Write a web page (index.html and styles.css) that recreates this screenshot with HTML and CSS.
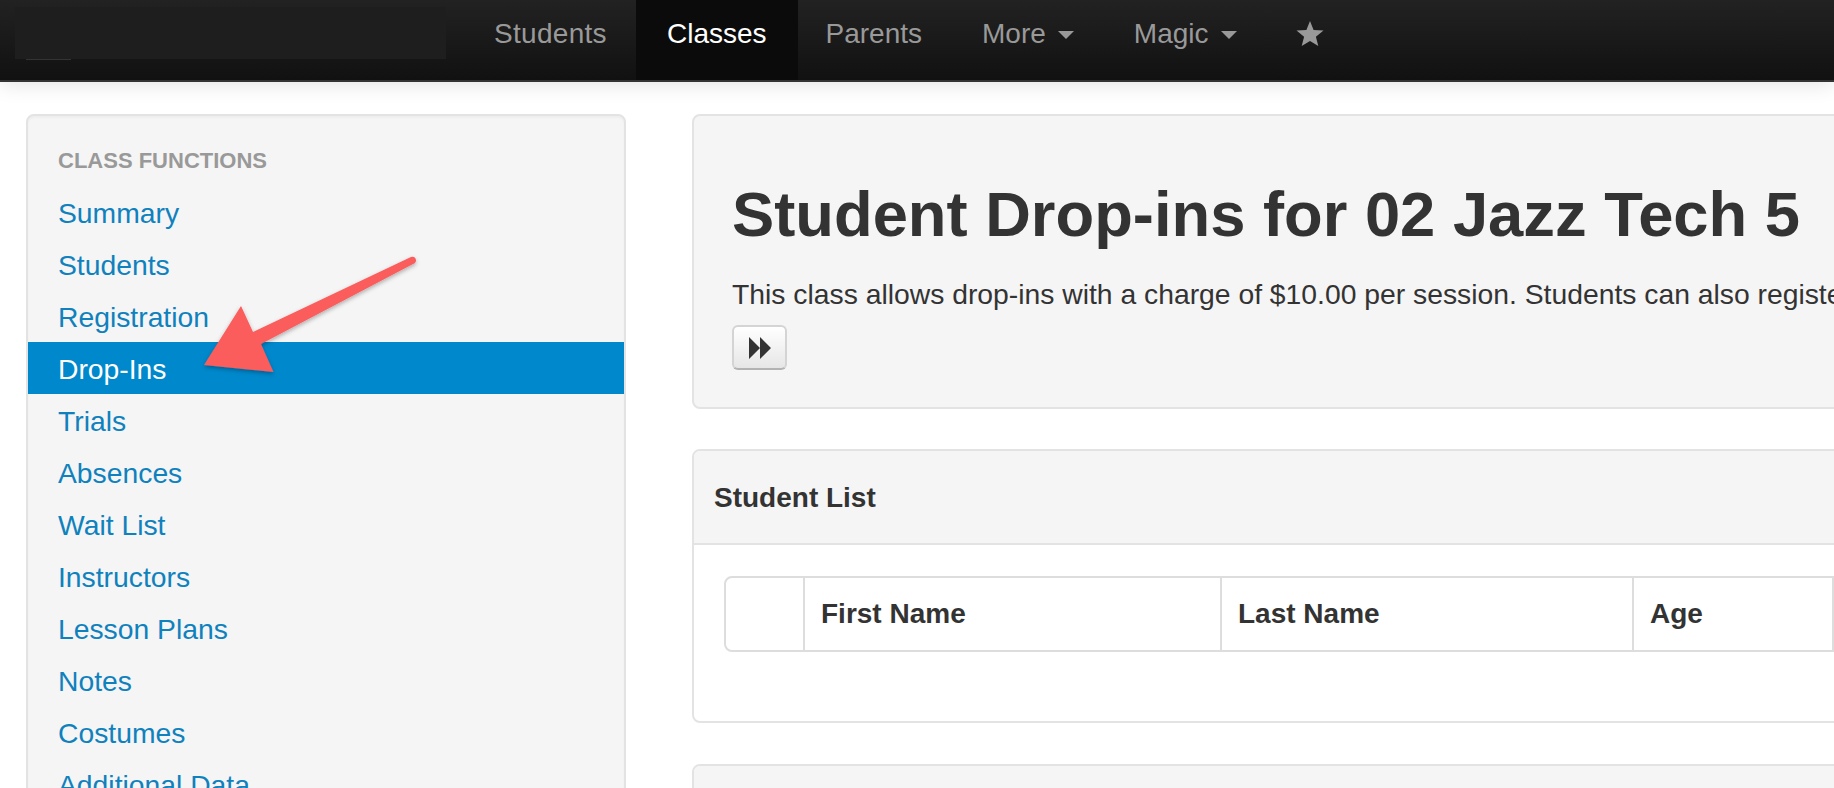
FILE: index.html
```html
<!DOCTYPE html>
<html lang="en">
<head>
<meta charset="utf-8">
<title>Student Drop-ins</title>
<link rel="stylesheet" href="styles.css">
</head>
<body>
<header class="navbar">
  <div class="brand"><span class="brand-line"></span></div>
  <nav class="nav">
    <a class="nav-item first">Students</a>
    <a class="nav-item active">Classes</a>
    <a class="nav-item after-active">Parents</a>
    <a class="nav-item">More<span class="caret"></span></a>
    <a class="nav-item">Magic<span class="caret"></span></a>
    <a class="nav-item star-item"><svg class="star" viewBox="0 0 28 25" width="28" height="25"><path d="M14 0l3.6 8.9 9.9.7-7.600 6.200 2.400 9.200L14 20l-8.300 5 2.400-9.200L.5 9.600l9.900-.7z"/></svg></a>
  </nav>
</header>
<div class="page">
  <aside class="sidebar">
    <div class="side-header">Class Functions</div>
    <a class="side-link">Summary</a>
    <a class="side-link">Students</a>
    <a class="side-link">Registration</a>
    <a class="side-link current">Drop-Ins</a>
    <a class="side-link">Trials</a>
    <a class="side-link">Absences</a>
    <a class="side-link">Wait List</a>
    <a class="side-link">Instructors</a>
    <a class="side-link">Lesson Plans</a>
    <a class="side-link">Notes</a>
    <a class="side-link">Costumes</a>
    <a class="side-link">Additional Data</a>
  </aside>
  <main class="main">
    <section class="hero">
      <h1 class="title">Student Drop-ins for 02 Jazz Tech 5</h1>
      <p class="lead">This class allows drop-ins with a charge of $10.00 per session. Students can also register for the whole class.</p>
      <button class="btn" type="button"><svg viewBox="0 0 22 22" width="22" height="22"><path d="M0 0l11 11L0 22zM11 0l11 11-11 11z"/></svg></button>
    </section>
    <section class="card">
      <div class="card-head">Student List</div>
      <div class="card-body">
        <div class="table">
          <div class="cell c-check"></div>
          <div class="cell c-first">First Name</div>
          <div class="cell c-last">Last Name</div>
          <div class="cell c-age">Age</div>
          <div class="cell c-rest"></div>
        </div>
      </div>
    </section>
    <section class="card next">
      <div class="card-head"></div>
    </section>
  </main>
</div>
<svg class="arrow" viewBox="0 0 1834 788" width="1834" height="788">
  <defs>
    <filter id="arrow-shadow" x="-20%" y="-20%" width="140%" height="140%">
      <feDropShadow dx="0" dy="2" stdDeviation="2" flood-color="#000" flood-opacity="0.3"/>
    </filter>
  </defs>
  <path filter="url(#arrow-shadow)" d="M204 365L241 306L253 332L411 257Q415 256 416 260Q416 263 413 264L261 344L273.500 372Z"/>
</svg>
</body>
</html>
```
FILE: styles.css
```css
* { box-sizing: border-box; }
html, body { margin: 0; height: 788px; overflow: hidden; background: #fff; }
body { font-family: "Liberation Sans", Arial, sans-serif; font-size: 28px; color: #333; position: relative; }

.navbar {
  height: 82px;
  display: flex;
  background: linear-gradient(#222, #111);
  border-bottom: 2px solid #333;
  box-shadow: 0 2px 20px rgba(0, 0, 0, 0.12);
  position: relative;
}
.brand {
  width: 431px;
  height: 52px;
  margin: 7px 18px 0 15px;
  background: #1e1e1e;
  position: relative;
}
.brand-line {
  position: absolute;
  left: 11px;
  bottom: -1px;
  width: 45px;
  height: 1px;
  background: #333;
}
.nav { display: flex; height: 80px; }
.nav-item {
  display: flex;
  align-items: center;
  padding: 0 30px 13px;
  height: 80px;
  color: #999;
}
.nav-item.first { letter-spacing: 0.3px; padding-right: 29px; }
.nav-item.active { color: #fff; background: #0b0b0b; padding: 0 31px 13px; }
.nav-item.after-active { padding-left: 28px; }
.caret {
  margin-left: 12px;
  margin-top: 2px;
  border-top: 8px solid #999;
  border-left: 8px solid transparent;
  border-right: 8px solid transparent;
}
.star-item { padding-left: 29px; }
.star { fill: #999; }

.page { display: flex; padding: 32px 0 0 26px; gap: 66px; width: 2400px; }
.sidebar {
  width: 600px;
  flex: none;
  height: 760px;
  background: #f5f5f5;
  border: 2px solid #e3e3e3;
  border-radius: 8px;
  padding-top: 18px;
  box-shadow: inset 0 2px 2px rgba(0, 0, 0, 0.03);
}
.side-header {
  height: 52px;
  padding-left: 30px;
  font-size: 22px;
  font-weight: bold;
  line-height: 54px;
  text-transform: uppercase;
  color: #999;
}
.side-link {
  display: block;
  height: 52px;
  line-height: 54px;
  padding-left: 30px;
  font-size: 28.3px;
  color: #0f81bd;
}
.side-link.current { background: #0088cc; color: #fff; }

.main { width: 1400px; flex: none; }
.hero {
  height: 295px;
  background: #f5f5f5;
  border: 2px solid #e3e3e3;
  border-radius: 8px;
  padding: 0 38px;
  white-space: nowrap;
}
.title {
  margin: 58px 0 0;
  font-size: 63.3px;
  line-height: 80px;
  font-weight: bold;
}
.lead { margin: 20px 0 0; font-size: 28.3px; line-height: 40px; }
.btn {
  display: flex;
  align-items: center;
  justify-content: center;
  width: 55px;
  height: 45px;
  margin-top: 11px;
  padding: 0;
  background: linear-gradient(#fff, #e6e6e6);
  border: 2px solid #d4d4d4;
  border-bottom-color: #b3b3b3;
  border-radius: 6px;
}
.btn svg { fill: #333; }

.card {
  margin-top: 40px;
  height: 274px;
  background: #fff;
  border: 2px solid #e3e3e3;
  border-radius: 8px;
  overflow: hidden;
}
.card-head {
  height: 94px;
  padding-left: 20px;
  line-height: 94px;
  font-weight: bold;
  background: #f5f5f5;
  border-bottom: 2px solid #e3e3e3;
}
.card-body { padding: 31px 30px; }
.table {
  display: flex;
  height: 76px;
  border: 2px solid #ddd;
  border-radius: 8px;
  font-weight: bold;
}
.cell {
  padding-left: 16px;
  line-height: 72px;
  border-left: 2px solid #ddd;
}
.c-check { width: 77px; border-left: 0; padding: 0; }
.c-first { width: 417px; }
.c-last { width: 412px; }
.c-age { width: 200px; }
.c-rest { flex: 1; }
.next { margin-top: 41px; }

.arrow { position: absolute; left: 0; top: 0; fill: #fb5b5b; pointer-events: none; }
```
